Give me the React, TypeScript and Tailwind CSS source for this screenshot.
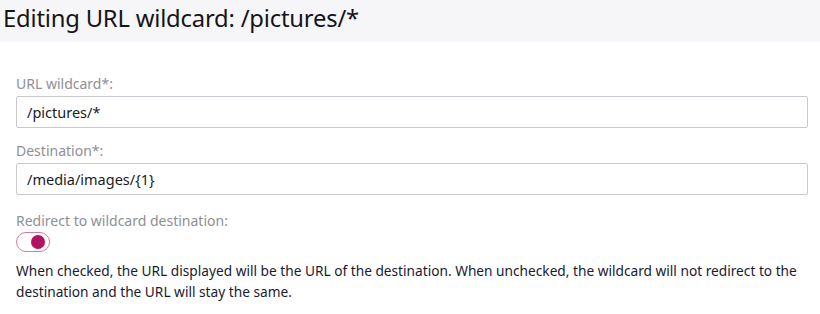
import React, { useState } from "react";

const Field = ({ label, value }: { label: string; value: string }) => {
  return (
    <div className="flex flex-col">
      <label className="text-[14px] leading-[18px] text-[#8f8f94] mb-[3px]">{label}</label>
      <input
        defaultValue={value}
        className="h-[32px] w-full rounded-[2px] border border-[#c9cacf] bg-white px-[10px] text-[14.5px] text-[#1b1b1f] outline-none"
      />
    </div>
  );
};

export default function App() {
  const [checked, setChecked] = useState(true);

  return (
    <div className="w-[820px] h-[314px] bg-white font-['Noto_Sans','Open_Sans',sans-serif]">
      <div className="h-[42px] bg-[#f6f6f8] flex items-center px-[3px]">
        <h1 className="text-[23.8px] leading-none text-[#151519] tracking-[-0.2px] pb-[5px]">
          Editing URL wildcard: /pictures/*
        </h1>
      </div>
      <div className="pl-[16px] pr-[12px] pt-[33px] flex flex-col">
        <Field label="URL wildcard*:" value="/pictures/*" />
        <div className="h-[14px]" />
        <Field label="Destination*:" value="/media/images/{1}" />
        <div className="h-[17px]" />
        <span className="text-[14px] leading-[18px] text-[#8f8f94]">Redirect to wildcard destination:</span>
        <button
          onClick={() => setChecked(!checked)}
          className="mt-[2px] w-[34px] h-[20px] rounded-full border border-[#d47aa6] bg-white flex items-center px-[2px]"
        >
          <span
            className={
              checked
                ? "ml-auto mr-[2px] w-[14px] h-[14px] rounded-full bg-[#b3125e]"
                : "w-[14px] h-[14px] rounded-full bg-[#b3125e]"
            }
          />
        </button>
        <p className="mt-[8px] text-[13.7px] leading-[21px] text-[#1b1b2f]">
          When checked, the URL displayed will be the URL of the destination. When unchecked, the wildcard will not redirect to the destination and the URL will stay the same.
        </p>
      </div>
    </div>
  );
}
